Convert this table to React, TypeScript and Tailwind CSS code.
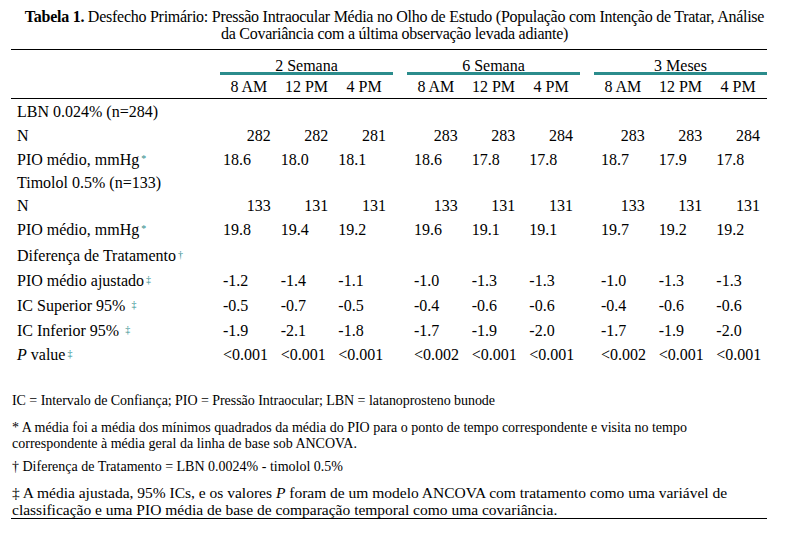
import React from "react";

const TEAL = "text-[#2b8c8c]";

type Cell = string;
type RowDef = {
  label: React.ReactNode;
  h: string;
  vals?: Cell[][];
  align?: "right" | "left";
};

const padLeft = ["pl-[3px]", "pl-[7px]", "pl-[7px]"];

function Sup({ c }: { c: string }) {
  return (
    <sup className={`${TEAL} text-[10px] relative -top-[3px] ml-[2px]`}>{c}</sup>
  );
}

const rows: RowDef[] = [
  { label: "LBN 0.024% (n=284)", h: "h-[24px]" },
  {
    label: "N",
    h: "h-[24px]",
    align: "right",
    vals: [
      ["282", "282", "281"],
      ["283", "283", "284"],
      ["283", "283", "284"],
    ],
  },
  {
    label: (
      <>
        PIO médio, mmHg<Sup c="*" />
      </>
    ),
    h: "h-[24px]",
    vals: [
      ["18.6", "18.0", "18.1"],
      ["18.6", "17.8", "17.8"],
      ["18.7", "17.9", "17.8"],
    ],
  },
  { label: "Timolol 0.5% (n=133)", h: "h-[22px]" },
  {
    label: "N",
    h: "h-[24px]",
    align: "right",
    vals: [
      ["133", "131", "131"],
      ["133", "131", "131"],
      ["133", "131", "131"],
    ],
  },
  {
    label: (
      <>
        PIO médio, mmHg<Sup c="*" />
      </>
    ),
    h: "h-[25px]",
    vals: [
      ["19.8", "19.4", "19.2"],
      ["19.6", "19.1", "19.1"],
      ["19.7", "19.2", "19.2"],
    ],
  },
  {
    label: (
      <>
        Diferença de Tratamento<Sup c="†" />
      </>
    ),
    h: "h-[26px]",
  },
  {
    label: (
      <>
        PIO médio ajustado<Sup c="‡" />
      </>
    ),
    h: "h-[24px]",
    vals: [
      ["-1.2", "-1.4", "-1.1"],
      ["-1.0", "-1.3", "-1.3"],
      ["-1.0", "-1.3", "-1.3"],
    ],
  },
  {
    label: (
      <>
        IC Superior 95% <Sup c="‡" />
      </>
    ),
    h: "h-[26px]",
    vals: [
      ["-0.5", "-0.7", "-0.5"],
      ["-0.4", "-0.6", "-0.6"],
      ["-0.4", "-0.6", "-0.6"],
    ],
  },
  {
    label: (
      <>
        IC Inferior 95% <Sup c="‡" />
      </>
    ),
    h: "h-[24px]",
    vals: [
      ["-1.9", "-2.1", "-1.8"],
      ["-1.7", "-1.9", "-2.0"],
      ["-1.7", "-1.9", "-2.0"],
    ],
  },
  {
    label: (
      <>
        <i>P</i> value<Sup c="‡" />
      </>
    ),
    h: "h-[24px]",
    vals: [
      ["<0.001", "<0.001", "<0.001"],
      ["<0.002", "<0.001", "<0.001"],
      ["<0.002", "<0.001", "<0.001"],
    ],
  },
];

const groups = ["2 Semana", "6 Semana", "3 Meses"];
const times = ["8 AM", "12 PM", "4 PM"];

export default function App() {
  return (
    <div className="w-[789px] h-[533px] bg-white text-black font-['Liberation_Serif',serif] overflow-hidden">
      <div className="pt-[8px] text-center text-[16px] leading-[17px] tracking-[-0.26px]">
        <b>Tabela 1.</b> Desfecho Primário: Pressão Intraocular Média no Olho de
        Estudo (População com Intenção de Tratar, Análise
        <br />
        da Covariância com a última observação levada adiante)
      </div>

      <div className="ml-[11px] w-[756px] mt-[7px] border-t border-black">
        {/* header row 1 */}
        <div className="flex text-[16px]">
          <div className="w-[209px]" />
          {groups.map((g, i) => (
            <div
              key={g}
              className={`w-[173px] pt-[9px] leading-[13px] text-center border-b-[3px] border-[#2b8c8c] ${
                i > 0 ? "ml-[14px]" : ""
              }`}
            >
              {g}
            </div>
          ))}
        </div>
        {/* header row 2 */}
        <div className="flex text-[16px] h-[24px] leading-[23px] border-b border-black">
          <div className="w-[209px]" />
          {groups.map((g, i) => (
            <div key={g} className={`w-[173px] flex ${i > 0 ? "ml-[14px]" : ""}`}>
              {times.map((t) => (
                <div key={t} className="flex-1 text-center">
                  {t}
                </div>
              ))}
            </div>
          ))}
        </div>
        {/* body */}
        {rows.map((r, ri) => (
          <div key={ri} className={`flex items-center text-[16px] leading-[17px] ${r.h}`}>
            <div className="w-[209px] pl-[6px] whitespace-nowrap">{r.label}</div>
            {groups.map((g, gi) => (
              <div key={g} className={`w-[173px] flex ${gi > 0 ? "ml-[14px]" : ""}`}>
                {(r.vals ? r.vals[gi] : ["", "", ""]).map((v, vi) => (
                  <div
                    key={vi}
                    className={`flex-1 whitespace-nowrap ${
                      r.align === "right" ? "text-right pr-[7px]" : `text-left ${padLeft[gi]}`
                    }`}
                  >
                    {v}
                  </div>
                ))}
              </div>
            ))}
          </div>
        ))}

        {/* footnotes */}
        <div className="mt-[26px] pl-[1px] text-[14px] leading-[17px] tracking-[-0.05px]">
          IC = Intervalo de Confiança; PIO = Pressão Intraocular; LBN = latanoprosteno bunode
        </div>
        <div className="mt-[11px] pl-[1px] text-[14px] leading-[16px]">
          * A média foi a média dos mínimos quadrados da média do PIO para o ponto de tempo
          correspondente e visita no tempo
          <br />
          correspondente à média geral da linha de base sob ANCOVA.
        </div>
        <div className="mt-[7px] pl-[1px] text-[14px] leading-[16px]">
          † Diferença de Tratamento = LBN 0.0024% - timolol 0.5%
        </div>
        <div className="mt-[9px] pl-[1px] text-[15.5px] leading-[17px] border-b border-black">
          ‡ A média ajustada, 95% ICs, e os valores <i>P</i> foram de um modelo ANCOVA com
          tratamento como uma variável de
          <br />
          classificação e uma PIO média de base de comparação temporal como uma covariância.
        </div>
      </div>
    </div>
  );
}
